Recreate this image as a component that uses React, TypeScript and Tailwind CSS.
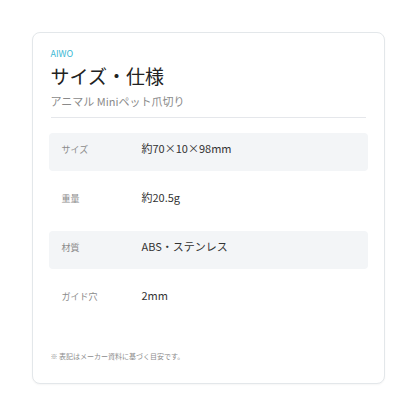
import React from "react";

const rows = [
  { label: "サイズ", value: "約70×10×98mm", shaded: true },
  { label: "重量", value: "約20.5g", shaded: false },
  { label: "材質", value: "ABS・ステンレス", shaded: true },
  { label: "ガイド穴", value: "2mm", shaded: false },
];

export default function App() {
  return (
    <div
      className="w-[416px] h-[416px] bg-white flex items-start justify-center pt-[32px]"
      style={{ fontFamily: '"Noto Sans CJK JP", "Noto Sans", sans-serif' }}
    >
      <div className="w-[353px] h-[352px] rounded-[8px] border border-[#e3e7ea] bg-white shadow-[0_1px_2px_rgba(0,0,0,0.04)] px-[18px] pt-[15px] flex flex-col">
        <div className="text-[9px] leading-[12px] text-[#3bb8d4]">AIWO</div>
        <div className="mt-[3px] text-[19px] leading-[26px] text-[#222]">サイズ・仕様</div>
        <div className="mt-[4px] text-[11px] leading-[16px] text-[#8a8a8a]">アニマル Miniペット爪切り</div>
        <div className="mt-[8px] h-px bg-[#e5e7eb]" />
        <div className="mt-[15px] flex flex-col gap-[11px] -mx-[2px]">
          {rows.map((r) => (
            <div
              key={r.label}
              className={`h-[38px] rounded-[4px] flex items-baseline pt-[8px] pl-[13px] ${r.shaded ? "bg-[#f3f5f7]" : ""}`}
            >
              <div className="w-[80px] text-[9px] leading-[14px] text-[#8c8c8c]">{r.label}</div>
              <div className="text-[11px] leading-[14px] text-[#333]">{r.value}</div>
            </div>
          ))}
        </div>
        <div className="mt-[33px] text-[7px] leading-[10px] text-[#8c8c8c]">※ 表記はメーカー資料に基づく目安です。</div>
      </div>
    </div>
  );
}
